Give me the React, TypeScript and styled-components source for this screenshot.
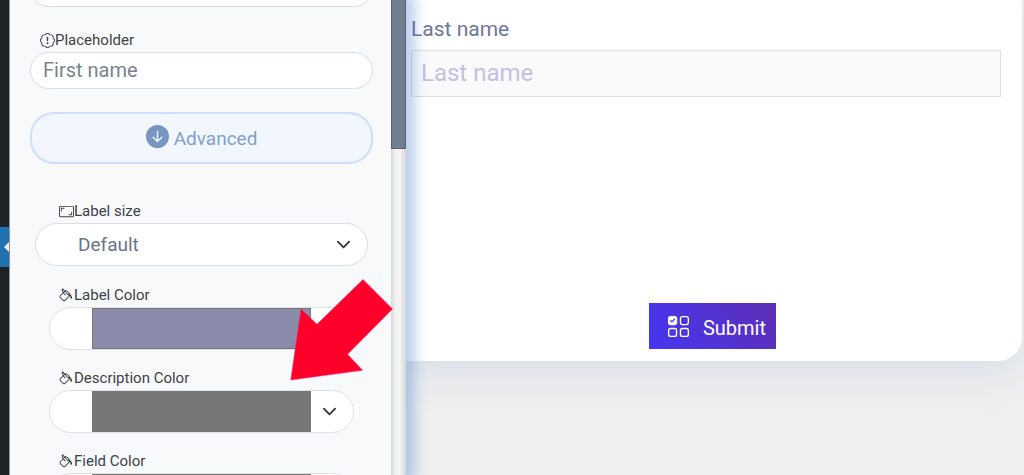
import React from 'react';
import styled, { createGlobalStyle } from 'styled-components';
import {
  BsArrowDownCircleFill,
  BsAspectRatio,
  BsPaintBucket,
  BsPatchExclamation,
  BsUiChecksGrid,
} from 'react-icons/bs';

const GlobalStyle = createGlobalStyle`
  *, *::before, *::after { box-sizing: border-box; }
  body {
    margin: 0;
    overflow: hidden;
    background: #efefef;
    font-family: Roboto, "Liberation Sans", sans-serif;
  }
  input, select, button { font-family: inherit; margin: 0; }
`;

const Shell = styled.div`
  display: flex;
  height: 100vh;
  overflow: hidden;
`;

const Rail = styled.nav`
  position: relative;
  z-index: 2;
  flex: none;
  width: 10px;
  padding-top: 227px;
  background: #1d2327;
  border-right: 1px solid #8d9195;
`;

const RailItem = styled.a`
  display: flex;
  align-items: center;
  justify-content: flex-end;
  height: 40px;
  background: #2271b1;

  &::after {
    content: '';
    border: 5px solid transparent;
    border-left: 0;
    border-right-color: #f0f0f1;
  }
`;

const Sidebar = styled.aside`
  position: relative;
  z-index: 1;
  flex: none;
  display: flex;
  width: 396px;
  background: #f8f9fb;
  box-shadow: 2px 0 12px 7px rgba(62, 114, 205, 0.34);
`;

const Settings = styled.form`
  flex: 1;
  min-width: 0;
  padding: 0 18px 0 20px;
  overflow: hidden;
`;

const ScrollTrack = styled.div`
  flex: none;
  width: 15px;
  background: linear-gradient(90deg, #dadada, #f3f3f3 35%, #f3f3f3 60%, #d6d6d6);
`;

const ScrollThumb = styled.div`
  height: 149px;
  background: #708090;
  border: 1px solid #566077;
  border-top: 0;
`;

const FieldLabel = styled.label<{ $inset?: boolean }>`
  display: flex;
  align-items: center;
  height: 24px;
  padding-left: ${(p) => (p.$inset ? 29 : 10)}px;
  font-size: 15px;
  line-height: 24px;
  color: #3f4247;

  svg { width: 15px; height: 15px; flex: none; }
`;

const TextInput = styled.input`
  display: block;
  width: 100%;
  height: 37px;
  padding: 0 12px 2px;
  border: 1px solid #dcdde6;
  border-radius: 19px;
  background: #fff;
  font-size: 20px;
  color: #7a838b;
  outline: none;
`;

const PreviousInput = styled(TextInput)`
  margin: -30px 0 21px;
`;

const AdvancedButton = styled.button`
  display: flex;
  align-items: center;
  justify-content: center;
  gap: 5px;
  width: 100%;
  height: 52px;
  margin: 23px 0 35px;
  border: 2px solid #cfdefe;
  border-radius: 24px;
  background: #f2f7ff;
  font-size: 19px;
  color: #829fcb;

  svg { width: 23px; height: 23px; color: #7895c3; margin-bottom: 4px; }
`;

const SelectBox = styled.div`
  display: flex;
  align-items: center;
  height: 43px;
  margin: 0 5px 17px;
  padding-right: 16px;
  border: 1px solid #dcdde6;
  border-radius: 22px;
  background: #fff;
`;

const Select = styled.select`
  flex: 1;
  height: 100%;
  padding: 0 0 0 42px;
  border: 0;
  background: transparent;
  appearance: none;
  font-size: 19px;
  color: #6c7387;
  outline: none;
`;

const ColorBox = styled.div`
  display: flex;
  height: 43px;
  margin: 0 19px 16px;
  padding-left: 42px;
  border: 1px solid #dfe0e9;
  border-radius: 22px;
  background: #fff;
`;

const ColorInput = styled.input`
  flex: 1;
  min-width: 0;
  height: 41px;
  padding: 0;
  border: 0;
  background: transparent;
  appearance: none;

  &::-webkit-color-swatch-wrapper { padding: 0; }
  &::-webkit-color-swatch { border: 1px solid #777; border-radius: 0; }
`;

const DropButton = styled.button`
  display: flex;
  align-items: center;
  flex: none;
  width: 42px;
  padding: 0 0 0 11px;
  border: 0;
  background: transparent;
`;

const Preview = styled.main`
  flex: 1;
  min-width: 0;
  padding-right: 2px;
`;

const Card = styled.form`
  height: 361px;
  padding-top: 15px;
  border-radius: 0 0 24px 0;
  background: #fff;
  box-shadow: 0 8px 40px rgba(150, 175, 220, 0.3);
`;

const PreviewField = styled.div`
  padding: 0 21px 0 5px;
`;

const PreviewLabel = styled.label`
  display: block;
  margin-bottom: 7px;
  font-size: 21px;
  line-height: 28px;
  color: #6b779c;
`;

const PreviewInput = styled.input`
  display: block;
  width: 100%;
  height: 47px;
  padding: 0 9px 2px;
  border: 1px solid #dfdfe8;
  border-radius: 0;
  background: #fafafa;
  font-size: 24px;
  outline: none;

  &::placeholder { color: #c5c0e2; opacity: 1; }
`;

const Actions = styled.div`
  display: flex;
  justify-content: center;
  margin-top: 206px;
  padding-right: 3px;
`;

const SubmitButton = styled.button`
  display: flex;
  align-items: center;
  gap: 14px;
  height: 46px;
  padding: 3px 10px 0 19px;
  border: 0;
  background: linear-gradient(60deg, #4536f2, #5e2fb6);
  font-size: 20px;
  color: #fff;

  svg { width: 21px; height: 21px; margin-bottom: 3px; }
`;

const Pointer = styled.svg`
  position: absolute;
  top: 279px;
  left: 280px;
  width: 104px;
  height: 102px;
  pointer-events: none;
`;

const Chevron = () => (
  <svg width="15" height="15" viewBox="0 0 16 16" fill="none" aria-hidden="true">
    <path d="m2 5 6 6 6-6" stroke="#343a40" strokeWidth="2" strokeLinecap="round" strokeLinejoin="round" />
  </svg>
);

const colorFields = [
  { id: 'label-color', label: 'Label Color', value: '#8a8aaa' },
  { id: 'description-color', label: 'Description Color', value: '#777777' },
  { id: 'field-color', label: 'Field Color', value: '#8a8aaa' },
];

export default function App() {
  return (
    <Shell>
      <GlobalStyle />
      <Rail>
        <RailItem href="#forms" aria-label="Forms" />
      </Rail>
      <Sidebar>
        <Settings>
          <PreviousInput aria-label="Description" />
          <FieldLabel htmlFor="placeholder">
            <BsPatchExclamation />
            Placeholder
          </FieldLabel>
          <TextInput id="placeholder" defaultValue="First name" />
          <AdvancedButton type="button">
            <BsArrowDownCircleFill />
            Advanced
          </AdvancedButton>
          <FieldLabel htmlFor="label-size" $inset>
            <BsAspectRatio />
            Label size
          </FieldLabel>
          <SelectBox>
            <Select id="label-size">
              <option>Default</option>
            </Select>
            <Chevron />
          </SelectBox>
          {colorFields.map((field) => (
            <React.Fragment key={field.id}>
              <FieldLabel htmlFor={field.id} $inset>
                <BsPaintBucket />
                {field.label}
              </FieldLabel>
              <ColorBox>
                <ColorInput id={field.id} type="color" defaultValue={field.value} />
                <DropButton type="button" aria-label={`${field.label} options`}>
                  <Chevron />
                </DropButton>
              </ColorBox>
            </React.Fragment>
          ))}
        </Settings>
        <ScrollTrack>
          <ScrollThumb />
        </ScrollTrack>
        <Pointer viewBox="0 0 104 102" aria-hidden="true">
          <path
            d="M73 .5 102.500 30 57.500 75.300 72.500 91.300 .8 101 11 30 27 45.300Z"
            fill="#ff002b"
            stroke="#ff1a75"
            strokeWidth=".5"
          />
        </Pointer>
      </Sidebar>
      <Preview>
        <Card>
          <PreviewField>
            <PreviewLabel htmlFor="last-name">Last name</PreviewLabel>
            <PreviewInput id="last-name" placeholder="Last name" />
          </PreviewField>
          <Actions>
            <SubmitButton type="button">
              <BsUiChecksGrid />
              Submit
            </SubmitButton>
          </Actions>
        </Card>
      </Preview>
    </Shell>
  );
}
